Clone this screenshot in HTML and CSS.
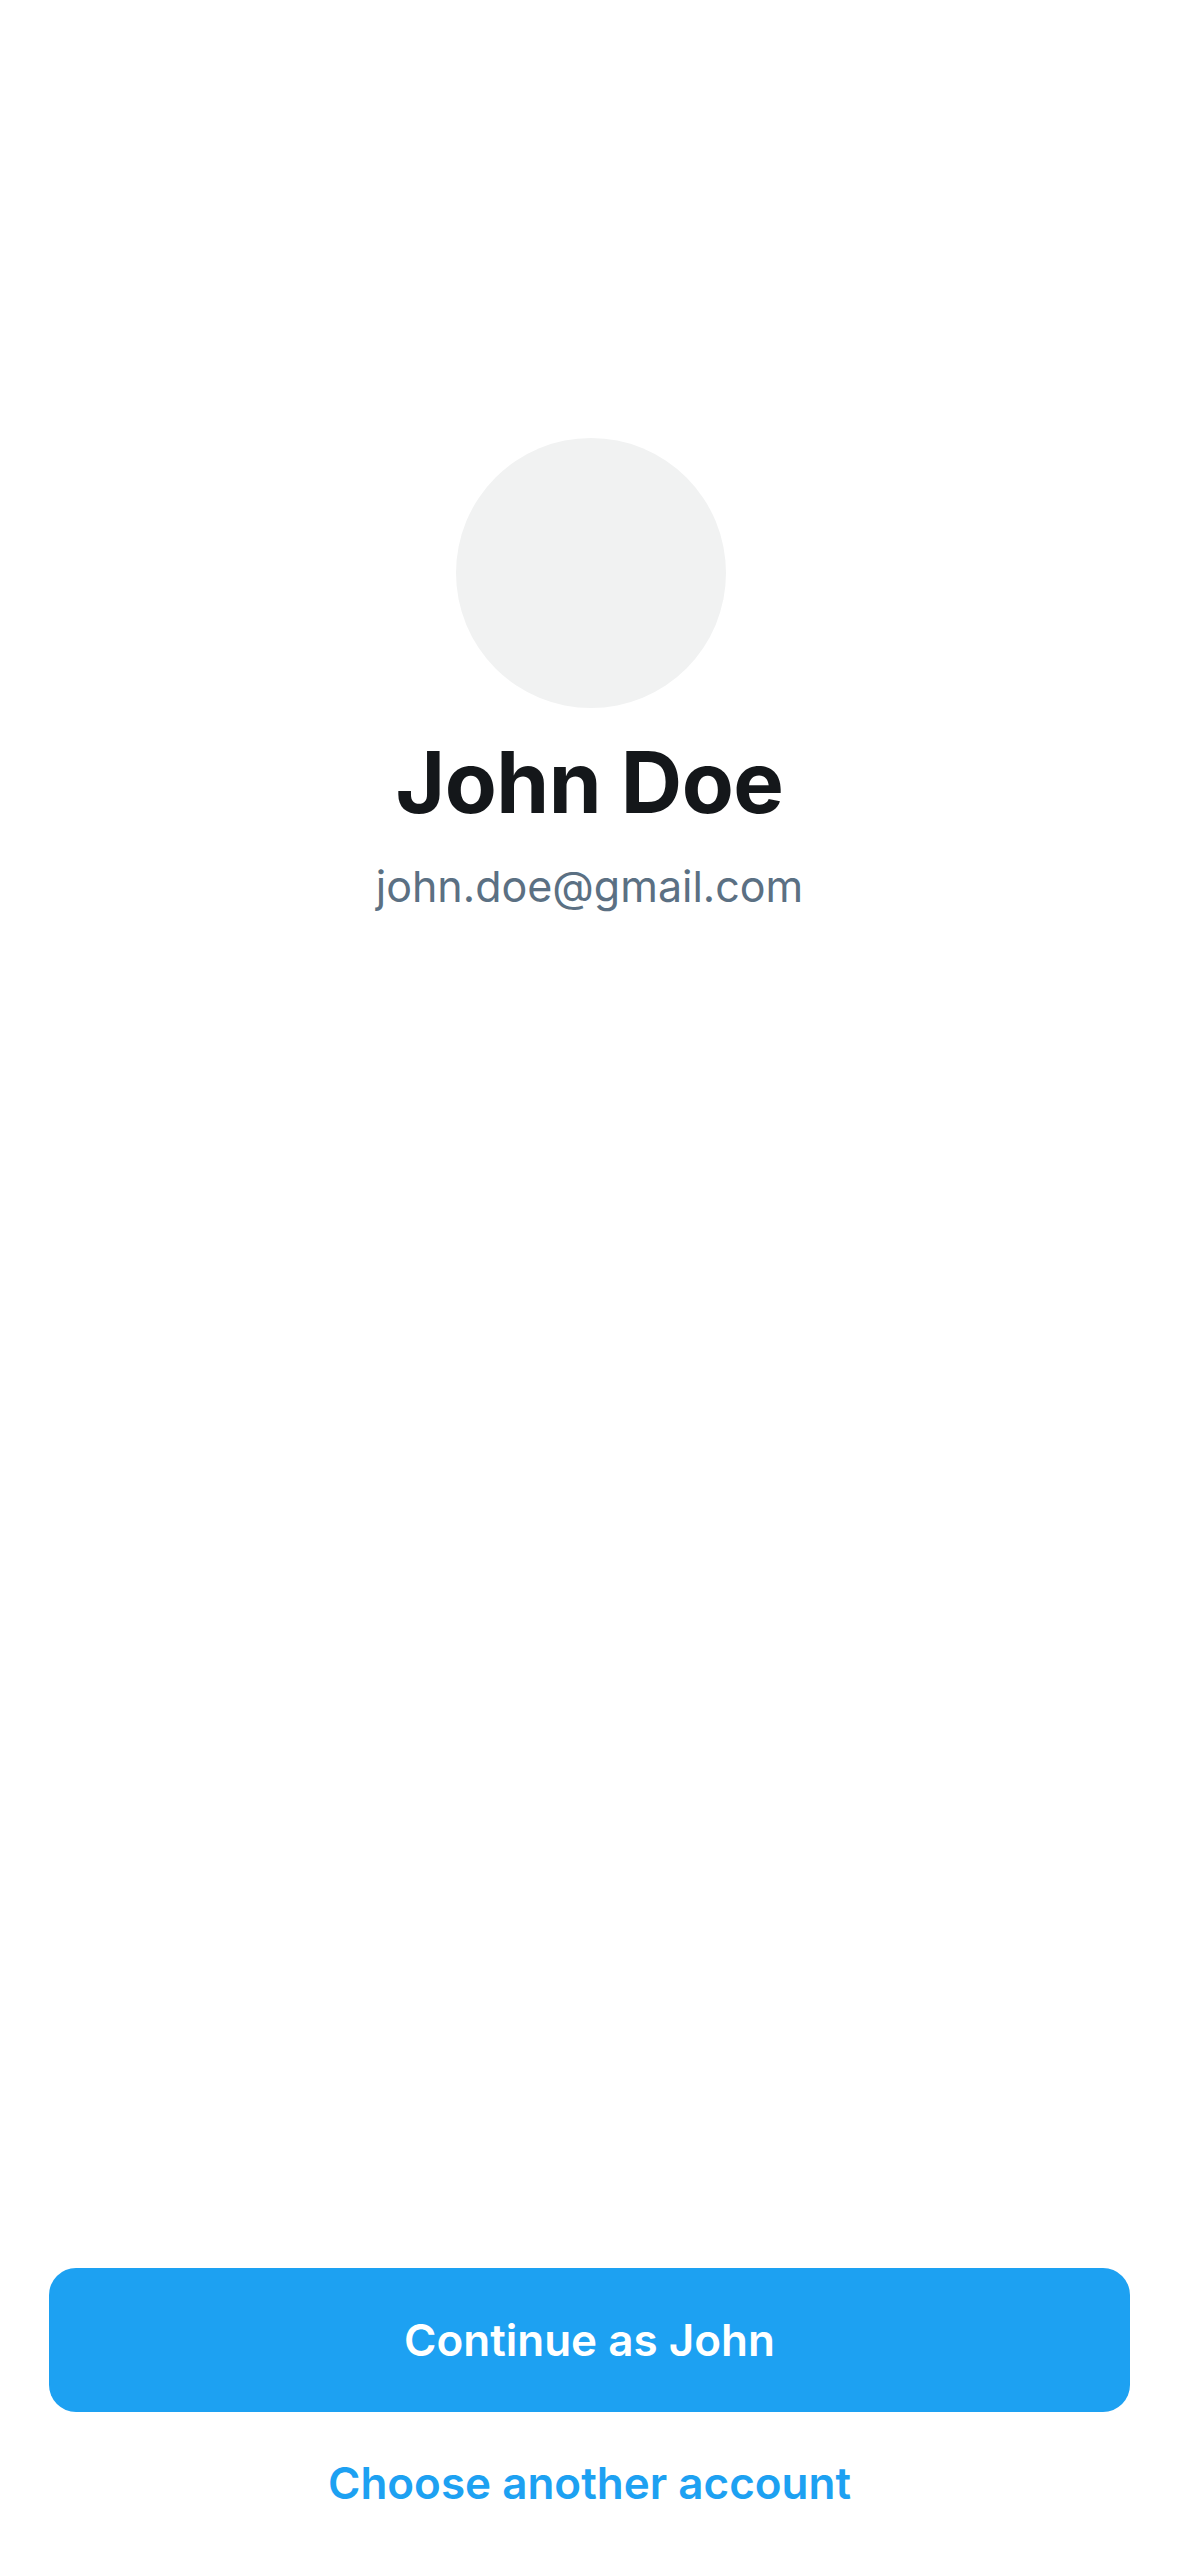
FILE: index.html
```html
<!DOCTYPE html>
<html lang="en">
<head>
<meta charset="utf-8">
<title>Continue as John</title>
<link rel="stylesheet" href="styles.css">
</head>
<body>
<main class="screen">
  <section class="profile">
    <div class="avatar"></div>
    <h1 class="name">John Doe</h1>
    <p class="email">john.doe@gmail.com</p>
  </section>
  <footer class="actions">
    <button class="primary" type="button">Continue as John</button>
    <a class="secondary" href="#">Choose another account</a>
  </footer>
</main>
</body>
</html>
```

FILE: styles.css
```css
* { box-sizing: border-box; }
html, body { margin: 0; padding: 0; background: #ffffff; }
body {
  font-family: Inter, "Liberation Sans", sans-serif;
  -webkit-font-smoothing: antialiased;
}
.screen {
  width: 1179px;
  min-height: 2556px;
  display: flex;
  flex-direction: column;
  padding: 438px 49px 43px;
}
.profile {
  display: flex;
  flex-direction: column;
  align-items: center;
}
.avatar {
  width: 270px;
  height: 270px;
  border-radius: 50%;
  background: #f1f2f2;
  margin-left: 2px;
}
.name {
  margin: 25px 0 0;
  font-size: 85px;
  line-height: 100px;
  font-weight: 700;
  color: #14171a;
  letter-spacing: -0.5px;
}
.email {
  margin: 23px 0 0;
  font-size: 43px;
  line-height: 60px;
  font-weight: 400;
  color: #5b7083;
}
.actions {
  margin-top: auto;
  display: flex;
  flex-direction: column;
  align-items: center;
  gap: 41px;
}
.primary {
  width: 100%;
  height: 144px;
  border: 0;
  border-radius: 27px;
  background: #1da1f2;
  color: #ffffff;
  font-family: Inter, "Liberation Sans", sans-serif;
  font-size: 44px;
  font-weight: 600;
  line-height: 60px;
  padding: 0;
}
.secondary {
  font-size: 44px;
  line-height: 60px;
  font-weight: 600;
  color: #1da1f2;
  text-decoration: none;
}
```
